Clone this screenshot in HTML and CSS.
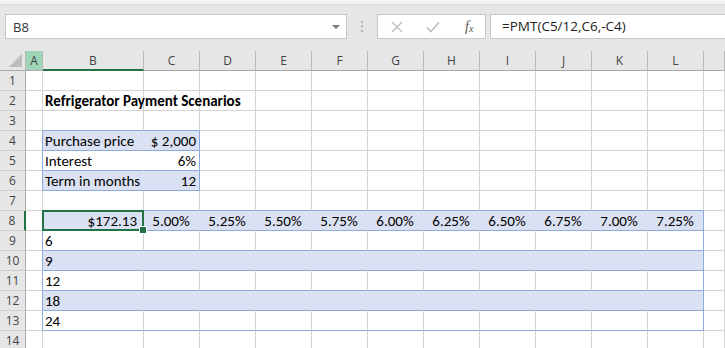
FILE: index.html
```html
<!DOCTYPE html>
<html lang="en">
<head>
  <meta charset="UTF-8" />
  <title>Refrigerator Payment Scenarios</title>
  <link rel="stylesheet" href="styles.css">
</head>
<body>
  <div class="top-strip"></div>

  <div class="formula-bar">
    <div class="name-box">
      <span>B8</span>
      <span class="caret"></span>
    </div>
    <div class="grip">⋮</div>
    <div class="fx-buttons">
      <svg class="ico" width="12" height="12" viewBox="0 0 12 12"><path d="M1 1 L11 11 M11 1 L1 11" stroke="#bcbcbc" stroke-width="1.4" fill="none"/></svg>
      <svg class="ico" width="14" height="12" viewBox="0 0 14 12"><path d="M1 6.5 L5 10.5 L13 1.5" stroke="#bcbcbc" stroke-width="1.6" fill="none"/></svg>
      <span class="fx">f<sub>x</sub></span>
    </div>
    <div class="formula">=PMT(C5/12,C6,-C4)</div>
  </div>

  <table class="sheet">
    <colgroup>
      <col class="c-rowhead"><col class="c-a"><col class="c-b">
      <col class="c-n"><col class="c-n"><col class="c-n"><col class="c-n"><col class="c-n">
      <col class="c-n"><col class="c-n"><col class="c-n"><col class="c-n"><col class="c-n">
      <col>
    </colgroup>
    <thead>
      <tr>
        <th class="corner"><span class="tri"></span></th>
        <th class="hot">A</th>
        <th class="cur">B</th>
        <th>C</th><th>D</th><th>E</th><th>F</th><th>G</th><th>H</th><th>I</th><th>J</th><th>K</th><th>L</th>
        <th></th>
      </tr>
    </thead>
    <tbody>
      <tr><th>1</th><td></td><td></td><td></td><td></td><td></td><td></td><td></td><td></td><td></td><td></td><td></td><td></td><td></td></tr>
      <tr><th>2</th><td></td><td class="title">Refrigerator Payment Scenarios</td><td></td><td></td><td></td><td></td><td></td><td></td><td></td><td></td><td></td><td></td><td></td></tr>
      <tr><th>3</th><td></td><td class="above"></td><td class="above"></td><td></td><td></td><td></td><td></td><td></td><td></td><td></td><td></td><td></td><td></td></tr>

      <tr class="fill"><th>4</th><td class="edge"></td><td class="t">Purchase price</td><td class="t last num">$ 2,000</td><td></td><td></td><td></td><td></td><td></td><td></td><td></td><td></td><td></td><td></td></tr>
      <tr><th>5</th><td class="edge"></td><td class="t open">Interest</td><td class="t last num">6%</td><td></td><td></td><td></td><td></td><td></td><td></td><td></td><td></td><td></td><td></td></tr>
      <tr class="fill"><th>6</th><td class="edge"></td><td class="t">Term in months</td><td class="t last num">12</td><td></td><td></td><td></td><td></td><td></td><td></td><td></td><td></td><td></td><td></td></tr>

      <tr><th>7</th><td></td><td class="above"></td><td class="above"></td><td class="above"></td><td class="above"></td><td class="above"></td><td class="above"></td><td class="above"></td><td class="above"></td><td class="above"></td><td class="above"></td><td class="above"></td><td></td></tr>

      <tr class="fill"><th class="cur-row">8</th><td class="edge"></td>
        <td class="t num active">$172.13</td>
        <td class="t pct">5.00%</td><td class="t pct">5.25%</td><td class="t pct">5.50%</td><td class="t pct">5.75%</td><td class="t pct">6.00%</td>
        <td class="t pct">6.25%</td><td class="t pct">6.50%</td><td class="t pct">6.75%</td><td class="t pct">7.00%</td><td class="t last pct">7.25%</td><td></td></tr>
      <tr><th>9</th><td class="edge"></td><td class="t">6</td><td class="t"></td><td class="t"></td><td class="t"></td><td class="t"></td><td class="t"></td><td class="t"></td><td class="t"></td><td class="t"></td><td class="t"></td><td class="t last"></td><td></td></tr>
      <tr class="fill"><th>10</th><td class="edge"></td><td class="t">9</td><td class="t"></td><td class="t"></td><td class="t"></td><td class="t"></td><td class="t"></td><td class="t"></td><td class="t"></td><td class="t"></td><td class="t"></td><td class="t last"></td><td></td></tr>
      <tr><th>11</th><td class="edge"></td><td class="t">12</td><td class="t"></td><td class="t"></td><td class="t"></td><td class="t"></td><td class="t"></td><td class="t"></td><td class="t"></td><td class="t"></td><td class="t"></td><td class="t last"></td><td></td></tr>
      <tr class="fill"><th>12</th><td class="edge"></td><td class="t">18</td><td class="t"></td><td class="t"></td><td class="t"></td><td class="t"></td><td class="t"></td><td class="t"></td><td class="t"></td><td class="t"></td><td class="t"></td><td class="t last"></td><td></td></tr>
      <tr><th>13</th><td class="edge"></td><td class="t">24</td><td class="t"></td><td class="t"></td><td class="t"></td><td class="t"></td><td class="t"></td><td class="t"></td><td class="t"></td><td class="t"></td><td class="t"></td><td class="t last"></td><td></td></tr>

      <tr><th>14</th><td></td><td></td><td></td><td></td><td></td><td></td><td></td><td></td><td></td><td></td><td></td><td></td><td></td></tr>
    </tbody>
  </table>
</body>
</html>
```

FILE: styles.css
```css
:root {
  --chrome: #e6e6e6;
  --head-line: #b8b8b8;
  --grid: #d4d4d4;
  --green: #217346;
  --tbl-line: #8ea9db;
  --tbl-fill: #d9e1f2;
  --ui-text: #444;
}

* {
  box-sizing: border-box;
  margin: 0;
  padding: 0;
}

body {
  background: #fff;
  font-family: "Open Sans", "Noto Sans", sans-serif;
  overflow: hidden;
}

/* barra de cima */
.top-strip {
  height: 5px;
  background: #f3f3f3;
  border-bottom: 1px solid #dedede;
}

.formula-bar {
  height: 46px;
  background: var(--chrome);
  display: flex;
  align-items: flex-start;
  padding: 9px 0 0 5px;
}

.name-box {
  width: 342px;
  height: 25px;
  background: #fff;
  border: 1px solid #c8c8c8;
  display: flex;
  align-items: center;
  justify-content: space-between;
  padding: 0 6px 0 7px;
  font-size: 13px;
  color: #333;
}

.caret {
  width: 0;
  height: 0;
  border-left: 4px solid transparent;
  border-right: 4px solid transparent;
  border-top: 4px solid #7a7a7a;
}

.grip {
  width: 30px;
  height: 25px;
  text-align: center;
  line-height: 24px;
  font-size: 14px;
  color: #a8a8a8;
}

.fx-buttons {
  width: 109px;
  height: 25px;
  background: #fff;
  border: 1px solid #c8c8c8;
  display: flex;
  align-items: center;
  gap: 0;
  padding-left: 13px;
}

.fx-buttons .ico {
  margin-right: 23px;
}

.fx {
  font-family: "Liberation Serif", serif;
  font-style: italic;
  font-size: 14px;
  color: #555;
  margin-left: 2px;
}

.fx sub {
  font-size: 10px;
  vertical-align: -1px;
}

.formula {
  flex: 1;
  height: 25px;
  margin-left: 4px;
  background: #fff;
  border: 1px solid #c8c8c8;
  border-right: none;
  padding-left: 11px;
  font-size: 13.5px;
  line-height: 23px;
  color: #222;
}

/* planilha */
.sheet {
  width: 100%;
  table-layout: fixed;
  border-collapse: separate;
  border-spacing: 0;
  font-family: Carlito, Calibri, Lato, sans-serif;
  font-size: 15px;
  color: #000;
}

.c-rowhead { width: 26px; }
.c-a { width: 17px; }
.c-b { width: 101px; }
.c-n { width: 56px; }

th, td {
  height: 20px;
  border-right: 1px solid var(--grid);
  border-bottom: 1px solid var(--grid);
  white-space: nowrap;
  overflow: visible;
}

th {
  background: var(--chrome);
  font-family: "Open Sans", sans-serif;
  font-weight: 400;
  font-size: 12px;
  color: var(--ui-text);
  text-align: center;
}

thead th {
  border-right-color: var(--head-line);
  border-bottom-color: #a9a9a9;
}

thead th.hot {
  background: #9fd5b7;
}

thead th.cur {
  border-bottom: 2px solid var(--green);
}

.corner {
  position: relative;
}

.corner .tri {
  position: absolute;
  right: 3px;
  bottom: 3px;
  width: 0;
  height: 0;
  border-left: 13px solid transparent;
  border-bottom: 13px solid #bcbcbc;
}

tbody th {
  border-right-color: #a9a9a9;
  border-bottom-color: #cfcfcf;
}

tbody th.cur-row {
  border-right: 2px solid var(--green);
}

td {
  padding: 0 3px 0 2px;
  line-height: 18px;
  vertical-align: bottom;
}

.title {
  font-weight: 700;
}

.num {
  text-align: right;
}

.pct {
  text-align: center;
}

/* tabelas azuis */
.above {
  border-bottom-color: var(--tbl-line);
}

.edge {
  border-right-color: var(--tbl-line);
}

td.t {
  border-bottom-color: var(--tbl-line);
}

td.t.open {
  border-right-color: #fff;
}

tr.fill td.t {
  background: var(--tbl-fill);
  border-right-color: var(--tbl-fill);
}

td.t.last,
tr.fill td.t.last {
  border-right-color: var(--tbl-line);
}

.active {
  position: relative;
  padding-right: 6px;
}

.active::after {
  content: "";
  position: absolute;
  top: -1px;
  left: -1px;
  right: -1px;
  bottom: -1px;
  border: 2px solid var(--green);
}

.active::before {
  content: "";
  position: absolute;
  right: -4px;
  bottom: -4px;
  width: 6px;
  height: 6px;
  background: var(--green);
  border: 1px solid #fff;
  z-index: 1;
}
```
